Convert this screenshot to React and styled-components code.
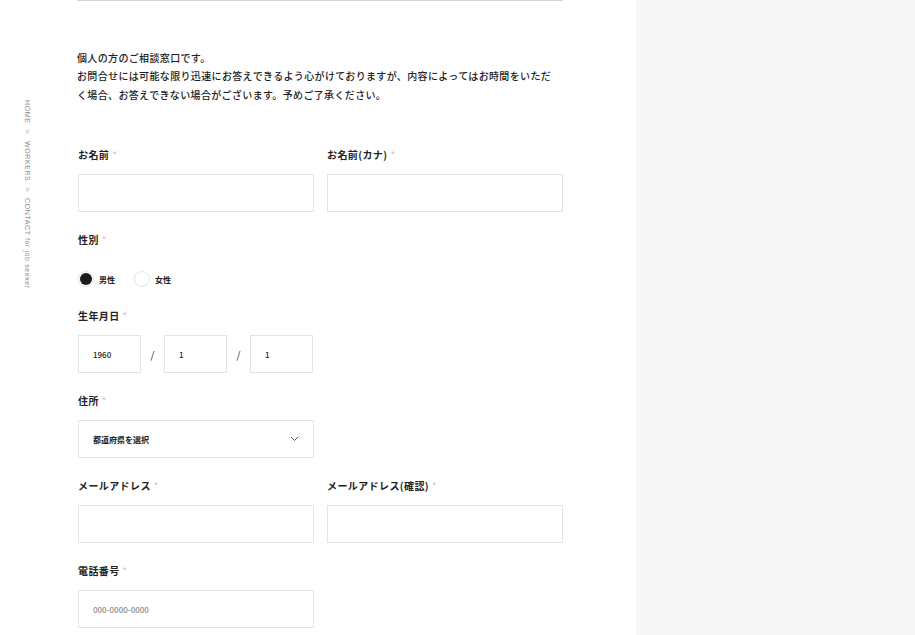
import React from "react";
import styled, { createGlobalStyle } from "styled-components";

const Global = createGlobalStyle`
  html, body { margin: 0; padding: 0; background: #fff; }
  body { font-family: "Noto Sans CJK JP", "Noto Sans", sans-serif; color: #222; }
  * { box-sizing: border-box; }
`;

const Page = styled.div`
  display: flex;
  width: 915px;
  height: 635px;
  overflow: hidden;
`;

const Main = styled.div`
  width: 636px;
  display: flex;
`;

const Side = styled.aside`
  width: 77px;
  display: flex;
  justify-content: flex-start;
  padding: 100px 0 0 23px;
`;

const Crumbs = styled.nav`
  writing-mode: vertical-rl;
  font-family: "Liberation Sans", "Noto Sans", sans-serif;
  font-size: 7px;
  letter-spacing: 0.6px;
  color: #8e8e8e;
  display: flex;
  align-items: center;
  gap: 6px;
`;

const Sep = styled.span`
  font-size: 8px;
  color: #aaa;
`;

const Content = styled.div`
  width: 486px;
`;

const Divider = styled.div`
  height: 1px;
  background: #d4d4d4;
`;

const Intro = styled.p`
  margin: 47px 0 0;
  width: 480px;
  font-size: 10px;
  line-height: 19px;
  letter-spacing: 0.35px;
  font-weight: 500;
`;

const Line = styled.span`
  display: block;
  line-height: ${({ $lh }) => $lh || "19px"};
`;

const Form = styled.form`
  margin-top: 42px;
  display: flex;
  flex-direction: column;
  gap: 19px;
`;

const Row = styled.div`
  display: grid;
  grid-template-columns: ${({ $cols }) => ($cols === 2 ? "236px 236px" : "236px")};
  column-gap: 13px;
  padding-left: 1px;
`;

const Field = styled.div`
  display: flex;
  flex-direction: column;
`;

const Label = styled.label`
  font-size: 10px;
  line-height: 18px;
  font-weight: 700;
  letter-spacing: 0.4px;
  margin-bottom: 10px;
`;

const Req = styled.span`
  color: #f0b3c2;
  margin-left: 3px;
  font-weight: 400;
`;

const Box = styled.div`
  height: 38px;
  width: ${({ $w }) => $w || "236px"};
  border: 1px solid #e4e4e4;
  display: flex;
  align-items: center;
  justify-content: space-between;
  padding: 0 14px 0 14px;
  font-size: 8px;
  font-weight: ${({ $bold }) => ($bold ? 700 : 500)};
  color: ${({ $muted }) => ($muted ? "#8a8a8a" : "#222")};
`;

const Radios = styled.div`
  display: flex;
  align-items: center;
  gap: 19px;
  height: 20px;
  margin-top: 10px;
  margin-bottom: -1px;
`;

const Option = styled.div`
  display: flex;
  align-items: center;
  gap: 5px;
  font-size: 8px;
  font-weight: 700;
`;

const Dot = styled.span`
  width: 16px;
  height: 16px;
  border-radius: 50%;
  border: 1px solid #e2e2e2;
  display: grid;
  place-items: center;
  &::after {
    content: "";
    width: 12px;
    height: 12px;
    border-radius: 50%;
    background: ${({ $on }) => ($on ? "#1b1b1b" : "transparent")};
  }
`;

const DateRow = styled.div`
  display: flex;
  align-items: center;
  padding-left: 1px;
`;

const Slash = styled.span`
  width: 23px;
  text-align: center;
  font-size: 10px;
`;

const Panel = styled.div`
  flex: 1;
  background: #f7f7f7;
`;

const Chevron = () => (
  <svg width="9" height="6" viewBox="0 0 9 6" fill="none">
    <path d="M1 1l3.5 3.5L8 1" stroke="#555" strokeWidth="1" />
  </svg>
);

const Input = ({ label, children, ...rest }) => (
  <Field>
    <Label>
      {label}
      <Req>*</Req>
    </Label>
    <Box {...rest}>{children}</Box>
  </Field>
);

export default function App() {
  return (
    <>
      <Global />
      <Page>
        <Main>
          <Side>
            <Crumbs>
              <span>HOME</span>
              <Sep>&gt;</Sep>
              <span>WORKERS</span>
              <Sep>&gt;</Sep>
              <span>CONTACT for job seeker</span>
            </Crumbs>
          </Side>
          <Content>
            <Divider />
            <Intro>
              <Line>個人の方のご相談窓口です。</Line>
              <Line $lh="18.5px">
                お問合せには可能な限り迅速にお答えできるよう心がけておりますが、内容によってはお時間をいただく場合、お答えできない場合がございます。予めご了承ください。
              </Line>
            </Intro>
            <Form>
              <Row $cols={2}>
                <Input label="お名前" />
                <Input label="お名前(カナ)" />
              </Row>
              <Row>
                <Field>
                  <Label>
                    性別<Req>*</Req>
                  </Label>
                  <Radios>
                    <Option>
                      <Dot $on />
                      男性
                    </Option>
                    <Option>
                      <Dot />
                      女性
                    </Option>
                  </Radios>
                </Field>
              </Row>
              <Field>
                <Label style={{ paddingLeft: 1 }}>
                  生年月日<Req>*</Req>
                </Label>
                <DateRow>
                  <Box $w="63px">1960</Box>
                  <Slash>/</Slash>
                  <Box $w="63px">1</Box>
                  <Slash>/</Slash>
                  <Box $w="63px">1</Box>
                </DateRow>
              </Field>
              <Row>
                <Input label="住所" $bold>
                  都道府県を選択
                  <Chevron />
                </Input>
              </Row>
              <Row $cols={2}>
                <Input label="メールアドレス" />
                <Input label="メールアドレス(確認)" />
              </Row>
              <Row>
                <Input label="電話番号" $muted>
                  000-0000-0000
                </Input>
              </Row>
            </Form>
          </Content>
        </Main>
        <Panel />
      </Page>
    </>
  );
}
